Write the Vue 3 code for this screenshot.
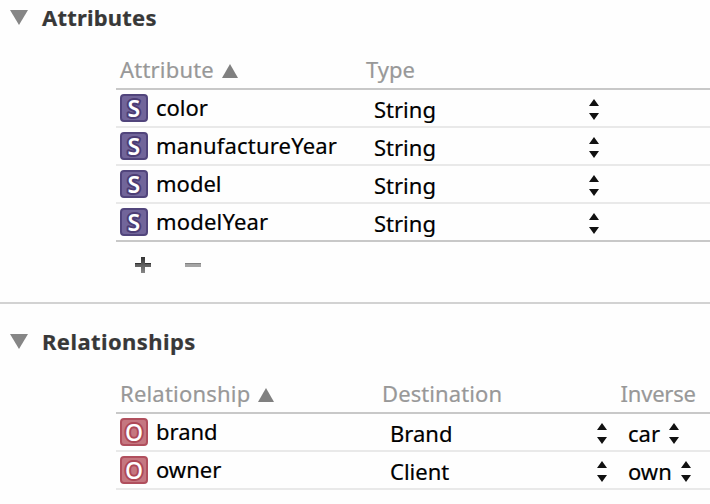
<script setup>
const attributes = [
  { name: 'color', type: 'String' },
  { name: 'manufactureYear', type: 'String' },
  { name: 'model', type: 'String' },
  { name: 'modelYear', type: 'String' },
]
const relationships = [
  { name: 'brand', destination: 'Brand', inverse: 'car' },
  { name: 'owner', destination: 'Client', inverse: 'own' },
]
const stepper = 'M5 0L10 7H0ZM0 14H10L5 21Z'
</script>

<template>
  <main class="inspector">
    <section class="section attributes">
      <h2 class="title">
        <svg class="disclosure" width="18" height="15"><path d="M0 0H18L9 15Z" fill="#868686" /></svg>
        <span class="t-attributes">Attributes</span>
      </h2>
      <div class="table">
        <div class="row head">
          <div class="cell name"><span class="spaced">Attribute</span>
            <svg class="sort" width="16" height="14"><path d="M8 0L16 14H0Z" fill="#808080" /></svg>
          </div>
          <div class="cell"><span>Type</span></div>
        </div>
        <div v-for="a in attributes" :key="a.name" class="row">
          <div class="cell name">
            <svg class="badge" width="28" height="28">
              <rect x="1" y="1" width="26" height="26" rx="3" fill="#71659a" stroke="#51457c" stroke-width="2" />
              <text x="13.8" y="22.7" class="letter s">S</text>
            </svg>
            <span class="label" :class="'n-' + a.name">{{ a.name }}</span>
          </div>
          <div class="cell value">
            <span class="label">{{ a.type }}</span>
            <svg class="stepper" width="10" height="21"><path :d="stepper" fill="#111" /></svg>
          </div>
        </div>
      </div>
      <div class="actions">
        <svg width="16" height="16">
          <defs><linearGradient id="plus" x2="0" y2="1"><stop stop-color="#333" /><stop offset="1" stop-color="#888" /></linearGradient></defs>
          <path d="M6 0H10V6H16V10H10V16H6V10H0V6H6Z" fill="url(#plus)" />
          <path d="M0 6.5H6M10 6.5H16" stroke="#333" />
        </svg>
        <svg width="16" height="16"><path d="M0 6H16V10H0Z" fill="#a4a4a4" /><path d="M0 6.5H16" stroke="#828282" /></svg>
      </div>
    </section>

    <section class="section relationships">
      <h2 class="title">
        <svg class="disclosure" width="18" height="15"><path d="M0 0H18L9 15Z" fill="#868686" /></svg>
        <span class="t-relationships">Relationships</span>
      </h2>
      <div class="table">
        <div class="row head">
          <div class="cell name"><span class="spaced">Relationship</span>
            <svg class="sort" width="16" height="14"><path d="M8 0L16 14H0Z" fill="#808080" /></svg>
          </div>
          <div class="cell"><span class="h-destination">Destination</span></div>
          <div class="cell"><span class="h-inverse">Inverse</span></div>
        </div>
        <div v-for="r in relationships" :key="r.name" class="row">
          <div class="cell name">
            <svg class="badge" width="28" height="28">
              <rect x="1" y="1" width="26" height="26" rx="3" fill="#c57780" stroke="#b04f5d" stroke-width="2" />
              <text x="14" y="22.7" class="letter o">O</text>
            </svg>
            <span class="label">{{ r.name }}</span>
          </div>
          <div class="cell value">
            <span class="label">{{ r.destination }}</span>
            <svg class="stepper" width="10" height="21"><path :d="stepper" fill="#111" /></svg>
          </div>
          <div class="cell value inverse">
            <span class="label">{{ r.inverse }}</span>
            <svg class="stepper" width="10" height="21"><path :d="stepper" fill="#111" /></svg>
          </div>
        </div>
      </div>
    </section>
  </main>
</template>

<style>
body { margin: 0; background: #fefefe; }
</style>

<style scoped>
.inspector {
  width: 710px; height: 504px; overflow: hidden; background: #fefefe;
  font: 22px/30px "Noto Sans", sans-serif; color: #000; white-space: nowrap;
  -webkit-text-stroke: 0.2px currentColor;
}
.section { box-sizing: border-box; }
.attributes { height: 304px; border-bottom: 2px solid #d2d2d2; }
.title { display: flex; height: 52px; margin: 0; padding: 2px 0 0 10px; box-sizing: border-box; font-size: 22px; font-weight: 700; color: #383838; }
.relationships .title { padding-top: 22px; height: 72px; }
.t-attributes { letter-spacing: 0.2px; }
.t-relationships { letter-spacing: 0.42px; }
.disclosure { margin: 8px 14px 0 0; }
.table { margin-left: 116px; }
.row { display: grid; height: 38px; box-sizing: border-box; border-bottom: 2px solid #e9e9e9; }
.attributes .row { grid-template-columns: 250px 1fr; }
.relationships .row { grid-template-columns: 266px 238px 1fr; }
.row.head { border-color: #c8c8c8; color: #989898; }
.attributes .row:last-child { border-color: #c8c8c8; }
.cell { display: flex; padding-top: 3px; }
.name { padding-left: 4px; }
.head .cell { padding-top: 2px; }
.spaced { letter-spacing: 0.2px; }
.h-destination { letter-spacing: 0.1px; }
.h-inverse { letter-spacing: -0.2px; margin-left: 0.5px; }
.n-manufactureYear, .n-modelYear { letter-spacing: 0.18px; }
.sort { margin: 10px 0 0 8px; }
.badge { margin: 1px 8px 0 0; overflow: visible; }
.row:not(.head) .name .label { margin-top: -1px; }
.value { padding: 4px 0 0 8px; }
.value .label { width: 215px; }
.relationships .value .label { width: 207px; }
.relationships .inverse .label { width: auto; margin-right: 9px; }
.stepper { margin-top: 5px; }
.actions { display: flex; gap: 34px; padding: 15px 0 0 135px; }
.letter { font: 600 23px "Noto Sans", sans-serif; text-anchor: middle; fill: #fff; stroke-width: 4px; paint-order: stroke; stroke-linejoin: round; }
.s { stroke: #4c3d75; }
.o { stroke: #ad4856; font-weight: 500; }
</style>
